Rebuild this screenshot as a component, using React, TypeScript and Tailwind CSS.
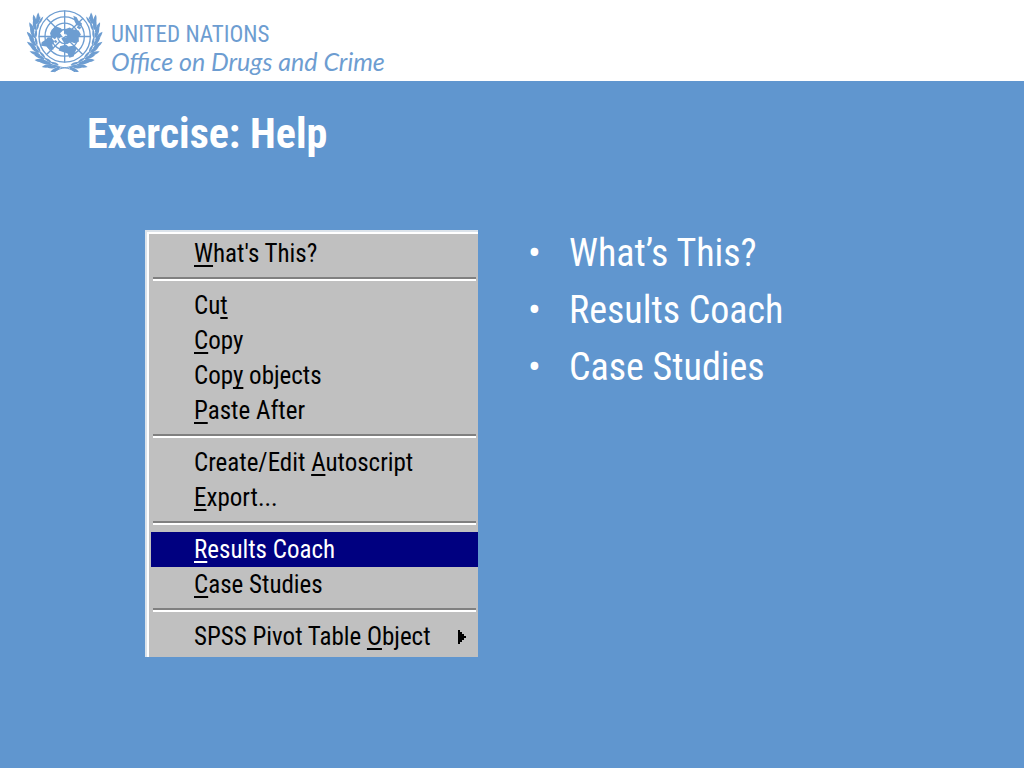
type MenuEntry = {
  // the accelerator letter is wrapped in underscores
  label: string;
  active?: boolean;
  submenu?: boolean;
};

const MENU_GROUPS: MenuEntry[][] = [
  [{ label: "_W_hat's This?" }],
  [
    { label: "Cu_t_" },
    { label: "_C_opy" },
    { label: "Cop_y_ objects" },
    { label: "_P_aste After" },
  ],
  [{ label: "Create/Edit _A_utoscript" }, { label: "_E_xport..." }],
  [{ label: "_R_esults Coach", active: true }, { label: "_C_ase Studies" }],
  [{ label: "SPSS Pivot Table _O_bject", submenu: true }],
];

const TOPICS = ["What’s This?", "Results Coach", "Case Studies"];

const LEAF_ANGLES = [103, 118, 133, 148, 163, 178, 193, 206];

function Branch() {
  return (
    <g>
      <path
        d="M180 214 C165 202 150 203 128 198 C88 190 56 158 53 115 C51 88 60 68 76 52"
        fill="none"
        strokeWidth="3"
      />
      {LEAF_ANGLES.map((a) => (
        <g key={a} transform={`rotate(${a} 149 108)`} stroke="none">
          <path d="M238 106 C246 109 253 121 252 138 C243 132 237 122 238 106 Z" />
          <path d="M240 100 C251 102 260 111 262 126 C251 121 243 113 240 100 Z" />
          <path d="M236 106 C231 112 230 122 233 134 C239 126 240 116 236 106 Z" />
        </g>
      ))}
      <path d="M76 48 C65 52 56 62 53 77 C66 72 75 62 76 48 Z" stroke="none" />
    </g>
  );
}

function Emblem() {
  return (
    <svg
      viewBox="30 20 240 200"
      className="h-[67px] w-20 shrink-0 fill-[#6d9dd1] stroke-[#6d9dd1]"
      role="img"
      aria-label="United Nations emblem"
    >
      <g fill="none" strokeWidth="4">
        <circle cx="149" cy="108" r="77" />
        <circle cx="149" cy="108" r="59" />
        <circle cx="149" cy="108" r="40" />
        <circle cx="149" cy="108" r="21" />
        <path d="M149 30V186M71 108H227M94 53L135 94M163 122L204 163M204 53L163 94M135 122L94 163" />
      </g>
      <g stroke="none">
        <path d="M110 88 L124 78 L138 83 L143 91 L135 98 L141 105 L133 114 L126 108 L120 116 L110 110 L105 98 Z" />
        <path d="M107 110 L118 122 L112 133 L116 147 L103 146 L94 138 L78 136 L80 125 L93 117 L98 110 Z" />
        <path d="M150 86 L164 81 L174 86 L191 90 L198 103 L190 110 L192 123 L179 128 L167 124 L158 130 L145 124 L139 114 L147 108 L153 112 L157 104 L149 98 Z" />
        <path d="M135 137 L153 132 L160 138 L174 136 L186 143 L180 155 L176 168 L163 172 L158 159 L146 155 L131 150 Z" />
        <path d="M175 46 L185 50 L190 60 L201 69 L198 78 L185 74 L179 63 Z" />
        <path d="M190 75 L199 81 L194 87 L185 81 Z" />
        <path d="M120 118 L127 122 L123 128 L117 124 Z" />
      </g>
      <path d="M139 103 L148 100 L152 106 L144 110 Z" fill="white" stroke="none" />
      <Branch />
      <g transform="matrix(-1 0 0 1 298 0)">
        <Branch />
      </g>
    </svg>
  );
}

function MenuLabel({ text }: { text: string }) {
  const [before, key, after] = text.split("_");
  return (
    <span className="whitespace-pre">
      {before}
      <span className="underline decoration-2 underline-offset-3 [text-decoration-skip-ink:none]">
        {key}
      </span>
      {after}
    </span>
  );
}

function MenuItem({ entry }: { entry: MenuEntry }) {
  return (
    <button
      type="button"
      role="menuitem"
      className={`flex h-[35px] w-full items-center justify-between pr-3 pl-[43px] text-left ${
        entry.active ? "bg-[#000080] text-white" : "text-black"
      }`}
    >
      <MenuLabel text={entry.label} />
      {entry.submenu && (
        <svg viewBox="0 0 8 14" className="h-3.5 w-2 fill-black" aria-hidden="true">
          <path d="M0 0H2V2H4V4H6V6H8V8H6V10H4V12H2V14H0Z" />
        </svg>
      )}
    </button>
  );
}

function ContextMenu() {
  return (
    <div className="border-t-2 border-l-2 border-[#dce3ea]">
      <div
        role="menu"
        className="border-t-2 border-l-2 border-white bg-[#c0c0c0] pt-0.5 pb-[3px] pl-0.5 text-[25px] leading-none"
      >
        {MENU_GROUPS.map((group, i) => (
          <div key={i}>
            {i > 0 && (
              <div role="separator" className="px-0.5 pt-1.5 pb-[7px]">
                <div className="h-1 border-t-2 border-b-2 border-t-[#808080] border-b-white" />
              </div>
            )}
            {group.map((entry) => (
              <MenuItem key={entry.label} entry={entry} />
            ))}
          </div>
        ))}
      </div>
    </div>
  );
}

export default function App() {
  return (
    <div className="flex min-h-screen flex-col bg-[#6096cf] font-['Roboto_Condensed','Liberation_Sans',sans-serif]">
      <header className="flex items-start gap-1.5 bg-white px-[25px] pt-[7px] pb-[7px] text-[#6d9dd1]">
        <Emblem />
        <div className="pt-3.5">
          <p className="text-[23px] leading-7">UNITED NATIONS</p>
          <p className="font-[Lato,sans-serif] text-[25px] leading-6 italic">
            Office on Drugs and Crime
          </p>
        </div>
      </header>

      <main className="flex-1 px-[87px] pt-7 text-white">
        <h1 className="text-[42px] leading-[50px] font-bold">Exercise: Help</h1>

        <div className="flex gap-[50px] pt-[71px] pl-[58px]">
          <div className="w-[333px] shrink-0">
            <ContextMenu />
          </div>
          <ul className="flex flex-col gap-2.5 text-[38px] leading-[47px]">
            {TOPICS.map((topic) => (
              <li key={topic} className="flex">
                <span className="w-[41px]">•</span>
                {topic}
              </li>
            ))}
          </ul>
        </div>
      </main>
    </div>
  );
}
